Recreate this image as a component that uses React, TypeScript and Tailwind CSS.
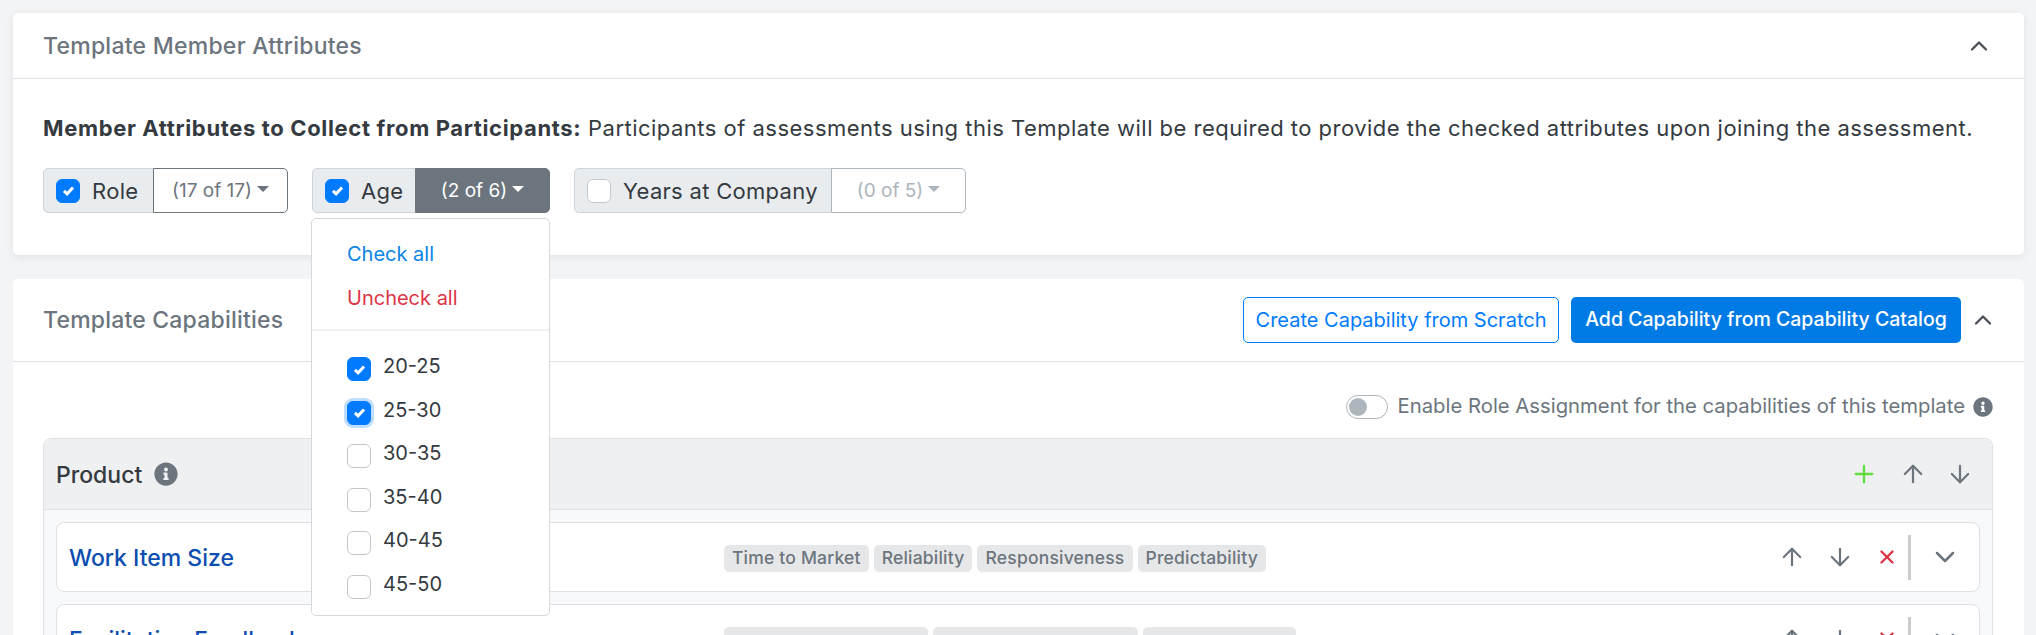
import { ArrowUp, ArrowDown, ChevronUp, ChevronDown, Plus, X } from 'lucide-react'
import { FaInfoCircle } from 'react-icons/fa'

const ages = [
  { label: '20-25', checked: true },
  { label: '25-30', checked: true, focused: true },
  { label: '30-35' },
  { label: '35-40' },
  { label: '40-45' },
  { label: '45-50' },
]

function Check({ checked, focused }: { checked?: boolean; focused?: boolean }) {
  return (
    <span
      className={`flex h-[24px] w-[24px] shrink-0 items-center justify-center rounded-[6px] border ${
        checked ? 'border-[#007bff] bg-[#007bff]' : 'border-[#c3c8ce] bg-white'
      } ${focused ? 'shadow-[0_0_0_3px_rgba(0,123,255,0.25)]' : ''}`}
    >
      {checked && (
        <svg viewBox="0 0 12 12" className="h-[13px] w-[13px]">
          <path d="M1.8 6.4l2.9 2.7 5.5-5.8" fill="none" stroke="white" strokeWidth="2.8" />
        </svg>
      )}
    </span>
  )
}

function AttributeGroup({ label, count, checked, active, muted, labelWidth, buttonWidth }: { label: string; count: string; checked?: boolean; active?: boolean; muted?: boolean; labelWidth: string; buttonWidth: string }) {
  return (
    <div className="flex h-[45px] text-[22px] tracking-[0.3px]">
      <div className={`flex items-center gap-[12px] rounded-l-[5px] border border-[#ced4da] bg-[#e9ecef] pl-[12px] text-[#343a40] ${labelWidth}`}>
        <Check checked={checked} />
        <span className="mt-[2px] whitespace-nowrap">{label}</span>
      </div>
      <button
        className={`flex items-center justify-center gap-[5px] rounded-r-[5px] border -ml-px ${buttonWidth} ${
          active ? 'border-[#6c757d] bg-[#6c757d] text-white' : muted ? 'border-[#adb5bd] bg-white text-[#adb5bd]' : 'border-[#6c757d] bg-white text-[#6c757d]'
        }`}
      >
        <span className="mt-[2px] text-[19px] tracking-normal">{count}</span>
        <span className={`mb-[3px] h-0 w-0 border-x-[6px] border-t-[6px] border-x-transparent ${active ? 'border-t-white' : muted ? 'border-t-[#adb5bd]' : 'border-t-[#6c757d]'}`} />
      </button>
    </div>
  )
}

function AgeMenu() {
  return (
    <div className="absolute left-[-1px] top-[50px] z-10 h-[398px] w-[239px] rounded-[5px] border border-[#d5d8dc] bg-white pt-[13px]">
      <div className="px-[35px] text-[20px] leading-[44px] text-[#0a84e6]">Check all</div>
      <div className="px-[35px] text-[20px] leading-[44px] text-[#dc3545]">Uncheck all</div>
      <div className="mt-[9px] border-t-2 border-[#f0f1f3] px-[35px] pt-[24px]">
        {ages.map(a => (
          <div key={a.label} className="flex h-[43.6px] items-start gap-[12px] text-[20px] leading-[24px] text-[#343a40]">
            <span className="mt-[2px]">
              <Check checked={a.checked} focused={a.focused} />
            </span>
            <span className="-mt-[1px]">{a.label}</span>
          </div>
        ))}
      </div>
    </div>
  )
}

function CapabilityRow({ title, children }: { title: string; children: React.ReactNode }) {
  return (
    <div className="flex h-[70px] shrink-0 items-center rounded-[8px] border border-[#dfe1e4] bg-white pl-[12px] pr-[18px]">
      <div className="mt-[3px] w-[655px] text-[23px] font-medium text-[#0b4db0]">{title}</div>
      <div className="mt-[2px] flex flex-1 gap-[5px]">{children}</div>
      <div className="flex h-[45px] items-center text-[#6c757d]">
        <ArrowUp size={28} strokeWidth={1.9} />
        <ArrowDown size={28} strokeWidth={1.9} className="ml-[19.5px]" />
        <X size={22} strokeWidth={2.6} className="ml-[22.5px] text-[#dc3545]" />
        <div className="ml-[10px] h-[45px] w-[3px] bg-[#cccccc]" />
        <ChevronDown size={32} strokeWidth={1.9} className="ml-[18px]" />
      </div>
    </div>
  )
}

function Tag({ children }: { children: string }) {
  return <span className="flex h-[27px] items-center whitespace-nowrap rounded-[5px] bg-[#e6e7e9] px-[8px] text-[17.5px] font-medium tracking-[0.2px] text-[#6c757d]">{children}</span>
}

export default function App() {
  return (
    <div className="flex h-[635px] flex-col gap-[24px] overflow-hidden bg-[#f3f4f6] pl-[13px] pr-[12px] pt-[13px] font-['Inter',sans-serif]">
      <section className="h-[242px] shrink-0 rounded-[5px] bg-white shadow-[0_2px_8px_rgba(0,0,0,0.08)]">
        <div className="flex h-[66px] items-center justify-between border-b border-[#dfe1e4] pl-[30px] pr-[31px]">
          <h2 className="mt-[1px] text-[23px] font-medium tracking-[0.25px] text-[#6c757d]">Template Member Attributes</h2>
          <ChevronUp size={28} className="text-[#495057]" />
        </div>
        <div className="px-[30px] pt-[33px]">
          <p className="whitespace-nowrap text-[22px] tracking-[0.48px] text-[#343a40]">
            <strong className="font-bold tracking-[0.65px]">Member Attributes to Collect from Participants:</strong> Participants of assessments using this Template will be required to provide the checked attributes upon joining the assessment.
          </p>
          <div className="mt-[23px] flex gap-[24px]">
            <AttributeGroup label="Role" count="(17 of 17)" checked labelWidth="w-[111px]" buttonWidth="w-[135px]" />
            <div className="relative">
              <AttributeGroup label="Age" count="(2 of 6)" checked active labelWidth="w-[104px]" buttonWidth="w-[135px]" />
              <AgeMenu />
            </div>
            <AttributeGroup label="Years at Company" count="(0 of 5)" muted labelWidth="w-[258px]" buttonWidth="w-[135px]" />
          </div>
        </div>
      </section>

      <section className="flex-1 rounded-[5px] bg-white">
        <div className="flex h-[83px] items-center border-b border-[#dfe1e4] pl-[30px] pr-[27px]">
          <h2 className="flex-1 text-[23px] font-medium tracking-[0.2px] text-[#6c757d]">Template Capabilities</h2>
          <button className="h-[46px] w-[316px] whitespace-nowrap rounded-[5px] border border-[#007bff] bg-white text-[20px] text-[#007bff]">Create Capability from Scratch</button>
          <button className="ml-[12px] h-[46px] w-[390px] whitespace-nowrap rounded-[5px] bg-[#007be5] text-[19.5px] font-medium text-white">Add Capability from Capability Catalog</button>
          <ChevronUp size={28} className="ml-[8px] text-[#495057]" />
        </div>
        <div className="pl-[30px] pr-[31px]">
          <div className="flex h-[76px] items-center justify-end gap-[10px] pt-[13px] text-[20.3px] text-[#6c757d]">
            <span className="flex h-[24px] w-[42px] items-center rounded-full border border-[#adb5bd] bg-white pl-[2px]">
              <span className="h-[18px] w-[18px] rounded-full bg-[#adb5bd]" />
            </span>
            <span className="whitespace-nowrap">Enable Role Assignment for the capabilities of this template</span>
            <FaInfoCircle size={20} className="-ml-[2px]" />
          </div>
          <div className="rounded-[8px] border border-[#dfe1e4] bg-[#f8f9fa]">
            <div className="flex h-[71px] items-center justify-between rounded-t-[8px] border-b border-[#dfe1e4] bg-[#eff0f2] pl-[12px] pr-[18px]">
              <div className="flex items-center gap-[12px] text-[23px] font-medium text-[#343a40]">
                <span className="mt-[2px]">Product</span>
                <FaInfoCircle size={24} className="text-[#6c757d]" />
              </div>
              <div className="flex items-center text-[#6c757d]">
                <Plus size={28} className="text-[#5fdc3f]" />
                <ArrowUp size={28} strokeWidth={1.9} className="ml-[21px]" />
                <ArrowDown size={28} strokeWidth={1.9} className="ml-[19px]" />
              </div>
            </div>
            <div className="flex flex-col gap-[12px] px-[12px] pt-[12px]">
              <CapabilityRow title="Work Item Size">
                <Tag>Time to Market</Tag>
                <Tag>Reliability</Tag>
                <Tag>Responsiveness</Tag>
                <Tag>Predictability</Tag>
              </CapabilityRow>
              <CapabilityRow title="Facilitation Feedback">
                <span className="h-[27px] w-[204px] rounded-[5px] bg-[#e6e7e9]" />
                <span className="h-[27px] w-[205px] rounded-[5px] bg-[#e6e7e9]" />
                <span className="h-[27px] w-[153px] rounded-[5px] bg-[#e6e7e9]" />
              </CapabilityRow>
            </div>
          </div>
        </div>
      </section>
    </div>
  )
}
